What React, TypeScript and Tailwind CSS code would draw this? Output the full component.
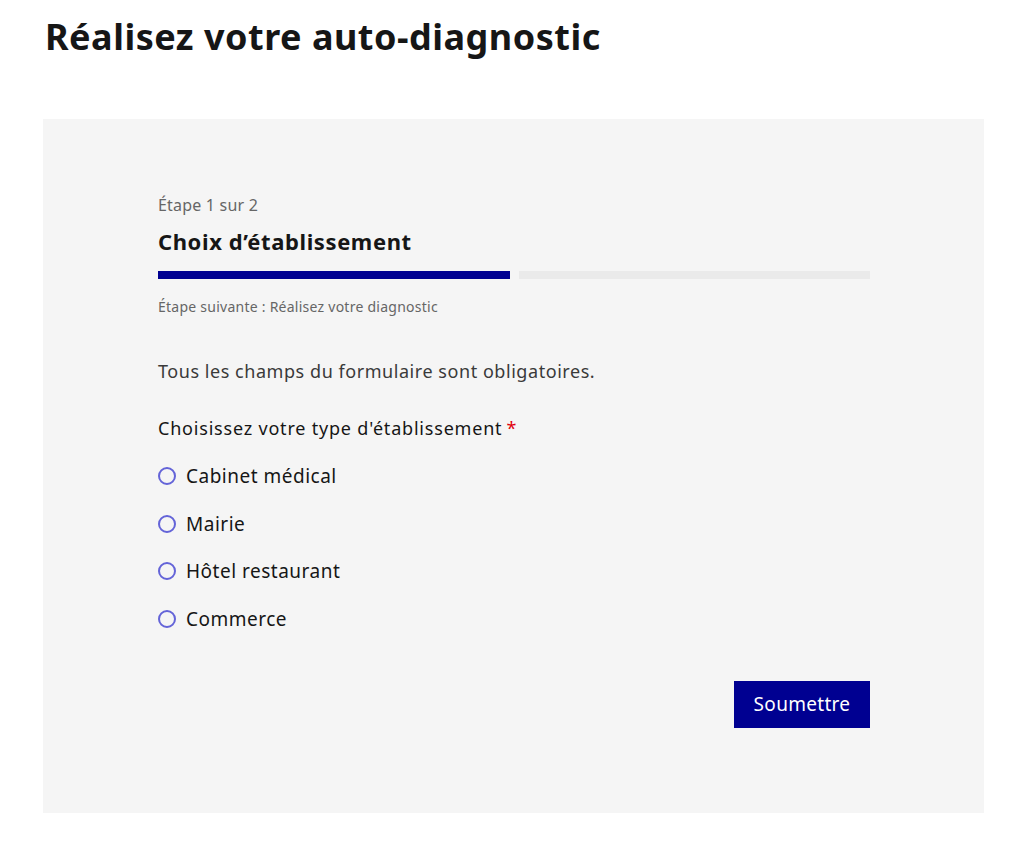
const options = ["Cabinet médical", "Mairie", "Hôtel restaurant", "Commerce"];

export default function App() {
  return (
    <div className="min-h-screen bg-white text-[#161616] font-['Noto_Sans',sans-serif]">
      <h1 className="pl-[45px] pt-[13px] text-[36px] leading-[48px] font-bold tracking-[0.5px]">
        Réalisez votre auto-diagnostic
      </h1>

      <div className="mt-[58px] ml-[43px] w-[941px] h-[694px] bg-[#f5f5f5] pl-[115px] pr-[114px] pt-[74px]">
        {/* Stepper */}
        <p className="text-[16px] leading-[24px] tracking-[0.2px] text-[#666]">Étape 1 sur 2</p>
        <h2 className="mt-[10px] text-[22px] leading-[28px] font-bold tracking-[0.6px]">Choix d’établissement</h2>
        <div className="mt-[16px] flex gap-[9px]">
          <div className="h-[8px] flex-1 bg-[#000091]" />
          <div className="h-[8px] flex-1 bg-[#eaeaea]" />
        </div>
        <p className="mt-[18px] text-[14px] leading-[20px] tracking-[0.25px] text-[#666]">
          Étape suivante : Réalisez votre diagnostic
        </p>

        {/* Form */}
        <p className="mt-[40px] text-[18px] leading-[28px] tracking-[0.55px] text-[#3a3a3a]">
          Tous les champs du formulaire sont obligatoires.
        </p>
        <fieldset className="mt-[30px]">
          <legend className="text-[18px] leading-[26px] tracking-[0.8px] text-[#161616]">
            Choisissez votre type d'établissement<span className="ml-[4px] text-[#e1000f]">*</span>
          </legend>
          <div className="mt-[23px] flex flex-col gap-[23.5px]">
            {options.map((o) => (
              <label key={o} className="flex items-center gap-[10px] text-[19px] leading-[24px] tracking-[0.5px] text-[#161616]">
                <span className="w-[18px] h-[18px] rounded-full border-2 border-[#6464d8]" />
                {o}
              </label>
            ))}
          </div>
        </fieldset>

        <div className="mt-[50px] flex justify-end">
          <button className="w-[136px] h-[47px] bg-[#000091] text-white text-[19px] tracking-[0.3px]">Soumettre</button>
        </div>
      </div>
    </div>
  );
}
